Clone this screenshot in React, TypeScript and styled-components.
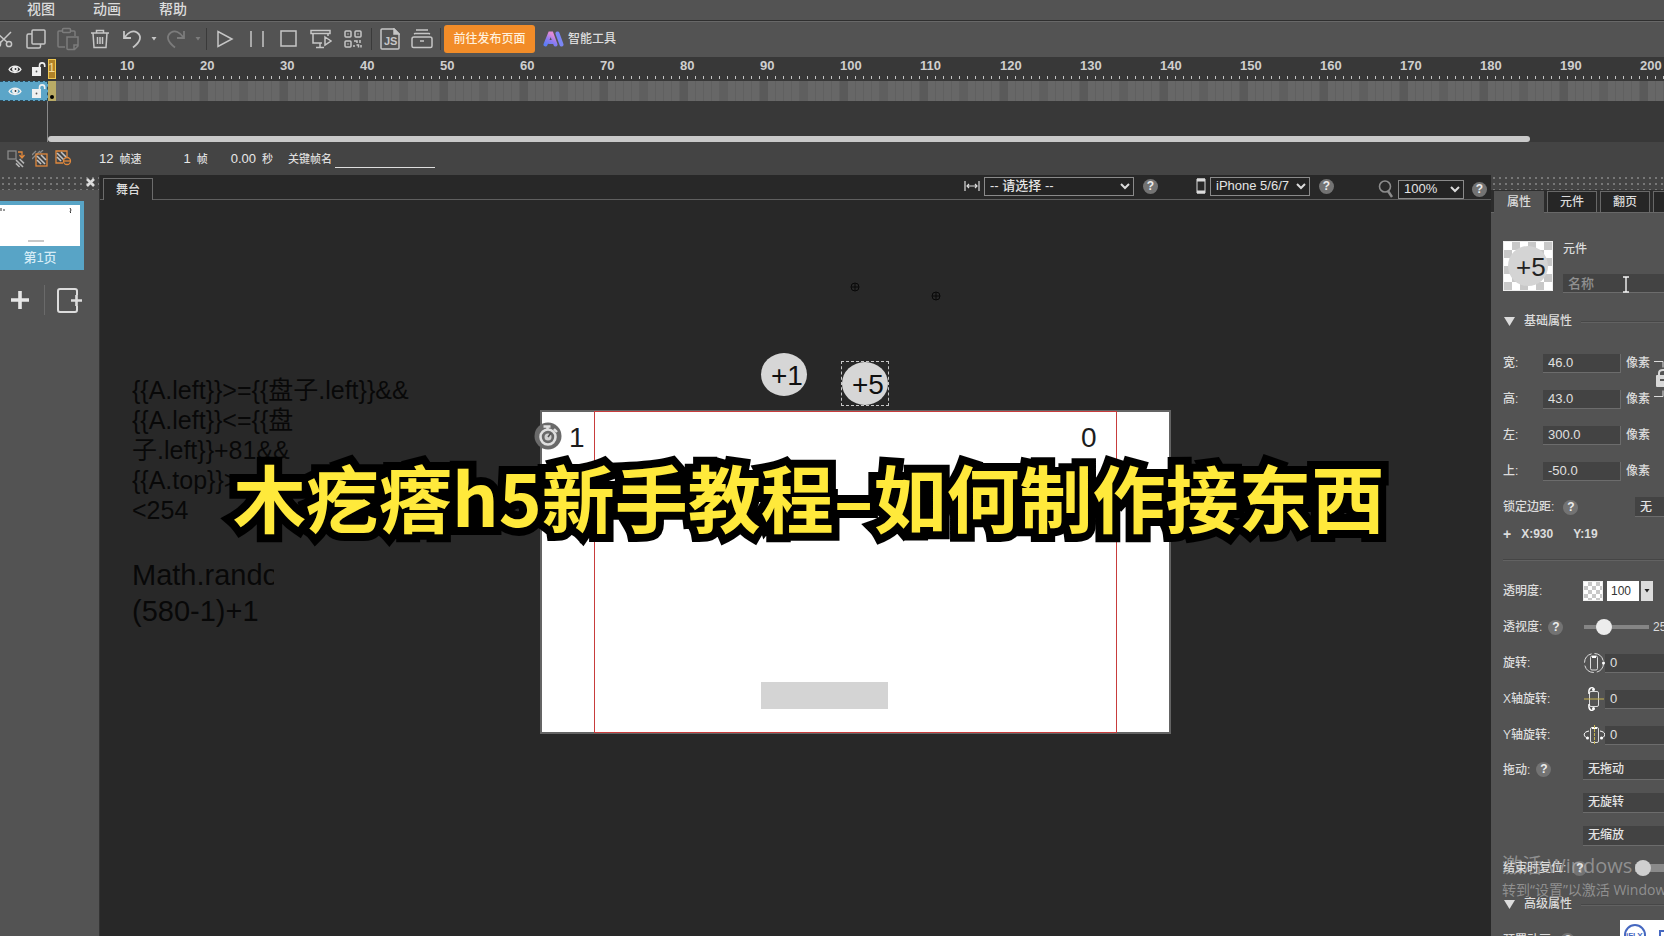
import React from "react";
import styled, { createGlobalStyle, css } from "styled-components";

const GlobalStyle = createGlobalStyle`
  *, *::before, *::after { box-sizing: border-box; }
  html, body, #root { height: 100%; }
  body {
    margin: 0;
    overflow: hidden;
    background: #282828;
    color: #dcdcdc;
    font: 500 12px/16px "Liberation Sans", "Noto Sans CJK SC", sans-serif;
  }
  button, input, select, textarea { font: inherit; color: inherit; border-radius: 0; }
  button { padding: 0; border: 0; background: none; }
  svg { display: block; flex: none; }
`;

const App_ = styled.div`
  position: relative;
  display: flex;
  flex-direction: column;
  height: 100vh;
  overflow: hidden;
  white-space: nowrap;
`;

/* ---------- menu and toolbar ---------- */

const MenuBar = styled.nav`
  display: flex;
  align-items: center;
  gap: 38px;
  flex: none;
  height: 20px;
  padding: 0 0 2px 27px;
  background: #535353;
`;

const MenuItem = styled.button`
  font-size: 14px;
  line-height: 18px;
`;

const Toolbar = styled.div`
  display: flex;
  align-items: center;
  flex: none;
  height: 37px;
  border-top: 1px solid #2f2f2f;
  box-shadow: inset 0 1px #686868;
  background: #535353;
`;

const Tool = styled.button<{ $narrow?: boolean; $dim?: boolean; $cut?: boolean }>`
  display: flex;
  justify-content: center;
  flex: none;
  width: ${(p) => (p.$narrow ? 12 : 32)}px;
  margin-left: ${(p) => (p.$cut ? -12 : 0)}px;
  color: ${(p) => (p.$dim ? "#7c7c7c" : "#c6c6c6")};
`;

const Separator = styled.span`
  flex: none;
  width: 1px;
  height: 22px;
  margin: 0 2px;
  background: #3a3a3a;
`;

const PublishButton = styled.button`
  width: 91px;
  height: 28px;
  margin: 0 8px 0 1px;
  border-radius: 3px;
  background: #f28c28;
  color: #fff0dc;
`;

const SmartTools = styled.button`
  display: flex;
  align-items: center;
  gap: 4px;
`;

/* ---------- timeline ---------- */

const Timeline = styled.section`
  display: grid;
  grid-template-columns: 48px 1fr;
  grid-template-rows: 24px 20px 41px;
  flex: none;
  background: #383838;
`;

const LayerCell = styled.div<{ $active?: boolean }>`
  display: flex;
  align-items: center;
  gap: 9px;
  padding-left: 8px;
  color: #f0f0f0;
  ${(p) =>
    p.$active &&
    css`
      border: 1px dashed #2b4d5e;
      border-left: 0;
      background: #5ba5c8;
    `}
`;

const Ruler = styled.div`
  display: flex;
  min-width: 0;
  overflow: hidden;
  background: repeating-linear-gradient(90deg, transparent 0 7px, #c4c4c4 7px 8px) 8px 19px / 100% 3px no-repeat;
`;

const Playhead = styled.div`
  flex: none;
  width: 8px;
  height: 20px;
  margin: 2px 64px 0 0;
  border: 1px solid #f0c850;
  background: #b08228;
  color: #f4dc96;
  font-size: 13px;
  text-align: center;
  text-indent: -1px;
`;

const RulerMark = styled.span`
  flex: none;
  width: 80px;
  padding-top: 1px;
  font-size: 13px;
  font-weight: 700;
  color: #cfcfcf;
`;

const Frames = styled.div`
  display: flex;
  min-width: 0;
  background:
    repeating-linear-gradient(90deg, transparent 0 72px, #5a5a5a 72px 80px),
    repeating-linear-gradient(90deg, transparent 0 32px, #5f5f5f 32px 40px),
    repeating-linear-gradient(90deg, #676767 0 7px, #606060 7px 8px);
`;

const KeyFrame = styled.button`
  display: flex;
  align-items: flex-end;
  justify-content: center;
  width: 8px;
  padding-bottom: 2px;
  background: #b9ab66;

  &::after {
    content: "";
    width: 4px;
    height: 4px;
    border-radius: 50%;
    background: #000;
  }
`;

const Tracks = styled.div`
  display: flex;
  align-items: flex-end;
  grid-column: 2;
  border-left: 1px solid #8a8a8a;
  margin-left: -1px;
`;

const ScrollThumb = styled.div`
  width: 91.7%;
  height: 6px;
  border-radius: 3px;
  background: #c9c9c9;
`;

const InfoBar = styled.div`
  display: flex;
  align-items: center;
  flex: none;
  height: 33px;
  padding-left: 7px;
  background: #444;
  font-size: 11px;
`;

const InfoIcons = styled.div`
  display: flex;
  gap: 6px;
  width: 92px;
`;

const Metric = styled.span<{ $gap: number }>`
  display: flex;
  align-items: baseline;
  gap: 6px;
  margin-right: ${(p) => p.$gap}px;

  b { font-size: 13px; font-weight: 400; color: #e8e8e8; }
`;

const FrameName = styled.input`
  width: 100px;
  height: 18px;
  margin-left: 3px;
  padding: 0;
  border: 0;
  border-bottom: 1px solid #dedede;
  background: transparent;
`;

/* ---------- work area ---------- */

const Work = styled.div`
  display: flex;
  flex: 1;
  min-height: 0;
`;

const dots = css`
  background: radial-gradient(circle, #777 0 1px, transparent 1px) 0 0 / 6px 6px #444;
`;

const PagePanel = styled.aside`
  flex: none;
  width: 100px;
  border-right: 1px solid #333;
  background: #535353;
`;

const Grip = styled.div`
  display: flex;
  align-items: center;
  justify-content: flex-end;
  height: 15px;
  padding-right: 4px;
  ${dots}
`;

const PageCard = styled.button`
  display: flex;
  flex-direction: column;
  align-items: center;
  width: 84px;
  height: 69px;
  margin-top: 11px;
  padding: 4px 4px 0 0;
  background: #58a4c6;
  color: #d6ecf6;
  font-size: 13px;
  line-height: 24px;
`;

const PagePreview = styled.span`
  display: block;
  width: 100%;
  height: 41px;
  background: #fff;
`;

const PageActions = styled.div`
  display: flex;
  align-items: center;
  margin: 15px 0 0 11px;
  height: 30px;
`;

const PageAction = styled.button<{ $first?: boolean }>`
  padding-left: ${(p) => (p.$first ? 0 : 12)}px;
  padding-right: ${(p) => (p.$first ? 15 : 0)}px;
  border-right: ${(p) => (p.$first ? "1px solid #6a6a6a" : "0")};
  height: 30px;
`;

const StageArea = styled.main`
  display: flex;
  flex-direction: column;
  flex: 1;
  min-width: 0;
`;

const StageBar = styled.div`
  display: flex;
  align-items: flex-end;
  flex: none;
  height: 25px;
  padding: 0 4px 0 3px;
  box-shadow: inset 0 -1px #5f5f5f;
`;

const StageTab = styled.button`
  width: 50px;
  height: 22px;
  margin-right: auto;
  border: 1px solid #6c6c6c;
  border-bottom: 0;
  background: #282828;
`;

const BarGroup = styled.div<{ $gap: number; $low?: boolean }>`
  display: flex;
  align-items: center;
  gap: 4px;
  height: 20px;
  margin-right: ${(p) => p.$gap}px;
  margin-bottom: ${(p) => (p.$low ? 1 : 4)}px;
`;

const PickWrap = styled.span<{ $w: number }>`
  display: grid;
  align-items: center;
  width: ${(p) => p.$w}px;

  > * { grid-area: 1 / 1; }
  > svg { justify-self: end; margin-right: 4px; pointer-events: none; }
`;

const PickBox = styled.select`
  appearance: none;
  width: 100%;
  height: 19px;
  padding: 0 0 0 5px;
  border: 1px solid #8a8a8a;
  background: #242424;
  color: #e4e4e4;
  font-size: 13px;
  line-height: 16px;
`;

const HelpDot = styled.button<{ $inset?: number }>`
  flex: none;
  width: 15px;
  height: 15px;
  margin-left: ${(p) => p.$inset ?? 0}px;
  border-radius: 50%;
  background: #737373;
  color: #ececec;
  font-size: 12px;
  font-weight: 700;
  line-height: 15px;
  text-align: center;
`;

/* Free canvas: items are placed where the author dropped them. */
const Canvas = styled.div`
  position: relative;
  flex: 1;
  overflow: hidden;
  background: #282828;
  font-weight: 400;
`;

const Note = styled.p<{ $size: number; $lh: number; $w: number; $top: number }>`
  position: absolute;
  left: 32px;
  top: ${(p) => p.$top}px;
  width: ${(p) => p.$w}px;
  margin: 0;
  overflow: hidden;
  color: #080808;
  font-size: ${(p) => p.$size}px;
  line-height: ${(p) => p.$lh}px;
`;

const Artboard = styled.div`
  position: absolute;
  left: 440px;
  top: 210px;
  width: 631px;
  height: 324px;
  border: 2px solid #646464;
  background: #fff;
`;

const SafeArea = styled.div`
  position: absolute;
  left: 494px;
  top: 211px;
  width: 523px;
  height: 322px;
  border: 1px solid #c83c3c;
`;

const Placed = styled.div<{ $x: number; $y: number }>`
  position: absolute;
  left: ${(p) => p.$x}px;
  top: ${(p) => p.$y}px;
`;

const Digit = styled(Placed)`
  color: #1c1c1c;
  font-size: 28px;
  line-height: 32px;
`;

const Plate = styled(Placed)`
  width: 127px;
  height: 27px;
  background: #d4d4d4;
`;

const Ball = styled(Placed)<{ $selected?: boolean }>`
  width: 48px;
  height: 45px;
  border: 1px dashed ${(p) => (p.$selected ? "#c8c8c8" : "transparent")};

  span {
    display: block;
    height: 43px;
    padding-left: 10px;
    border-radius: 50%;
    background: #d6d6d6;
    color: #101010;
    font-size: 28px;
    line-height: 45px;
  }
`;

const Caption = styled.h1`
  position: absolute;
  left: 233px;
  top: 443px;
  margin: 0;
  color: #ffe93b;
  font: 700 73px/104px "Noto Sans CJK SC", sans-serif;
  -webkit-text-stroke: 16px #000;
  paint-order: stroke fill;
  pointer-events: none;
`;

/* ---------- property panel ---------- */

const PropPanel = styled.aside`
  position: relative;
  flex: none;
  width: 173px;
  overflow: hidden;
  background: #535353;
`;

const Tabs = styled.div`
  display: flex;
  gap: 3px;
  height: 23px;
  padding: 1px 0 0 3px;
  background: #2c2c2c;
  box-shadow: inset 0 -1px #686868;
`;

const Tab = styled.button<{ $on?: boolean }>`
  flex: none;
  width: 50px;
  height: 22px;
  border: 1px solid ${(p) => (p.$on ? "#535353" : "#686868")};
  background: ${(p) => (p.$on ? "#535353" : "#262626")};
`;

const Identity = styled.div`
  display: flex;
  gap: 10px;
  padding: 28px 0 8px 12px;
`;

const Swatch = styled.div<{ $size: number }>`
  flex: none;
  width: ${(p) => p.$size}px;
  height: ${(p) => p.$size}px;
  border: 1px solid #eee;
  background: repeating-conic-gradient(#c8c8c8 0 25%, #fff 0 50%) 0 0 / ${(p) => (p.$size > 30 ? 16 : 8)}px
    ${(p) => (p.$size > 30 ? 16 : 8)}px;

  span {
    display: block;
    height: 40px;
    margin: 4px;
    padding-left: 8px;
    border-radius: 50%;
    background: #d4d4d4;
    color: #222;
    font-size: 26px;
    font-weight: 400;
    line-height: 42px;
  }
`;

const NameColumn = styled.label`
  display: flex;
  flex-direction: column;
  gap: 17px;
`;

const Field = styled.input<{ $w: number }>`
  flex: none;
  width: ${(p) => p.$w}px;
  height: 19px;
  padding: 0 5px;
  border: solid #6c6c6c;
  border-width: 0 1px 1px 0;
  background: #434343;
  color: #e0e0e0;
  font-size: 13px;

  &::placeholder { color: #909090; opacity: 1; }
`;

const SectionHead = styled.h2`
  display: flex;
  align-items: center;
  gap: 9px;
  height: 24px;
  margin: 8px 0 6px 13px;
  font-size: 12px;
  font-weight: 500;

  &::after {
    content: "";
    flex: 1;
    height: 1px;
    background: #474747;
    box-shadow: 0 1px #626262;
  }
`;

const Rows = styled.div`
  padding-top: 6px;
`;

const Row = styled.div<{ $h?: number }>`
  display: flex;
  align-items: center;
  height: ${(p) => p.$h ?? 36}px;
  padding-left: 12px;
`;

const RowLabel = styled.div<{ $w: number }>`
  display: flex;
  align-items: center;
  gap: 6px;
  flex: none;
  width: ${(p) => p.$w}px;
`;

const Unit = styled.span`
  margin-left: 5px;
`;

const RatioLock = styled.button`
  position: absolute;
  left: 163px;
  top: 183px;
`;

const Position = styled(Row)`
  gap: 20px;
  font-weight: 600;

  span:first-child { margin-right: -10px; font-size: 14px; }
`;

const Rule = styled.hr`
  height: 2px;
  margin: 16px 0 12px 12px;
  border: 0;
  background: #454545;
  border-bottom: 1px solid #626262;
`;

const Opacity = styled.input`
  width: 32px;
  height: 20px;
  margin: 0 2px 0 4px;
  padding: 0 4px;
  border: 0;
  background: #fff;
  color: #333;
`;

const DropArrow = styled.button`
  display: grid;
  place-items: center;
  width: 12px;
  height: 20px;
  background: #dcdcdc;
`;

const Slider = styled.input`
  appearance: none;
  flex: none;
  width: 65px;
  height: 16px;
  margin: 0 4px 0 1px;
  background: linear-gradient(#858585, #858585) center / 100% 4px no-repeat;

  &::-webkit-slider-thumb {
    appearance: none;
    width: 16px;
    height: 16px;
    border-radius: 50%;
    background: #ececec;
  }
`;

const Choice = styled.select`
  appearance: none;
  flex: none;
  width: 140px;
  height: 20px;
  padding: 0 5px;
  border: 0;
  border-bottom: 1px solid #6c6c6c;
  background: #434343;
  color: #e4e4e4;
`;

const AxisIcon = styled.span`
  width: 28px;
`;

const Toggle = styled.input`
  appearance: none;
  flex: none;
  width: 40px;
  height: 16px;
  margin: 0;
  background: linear-gradient(#8a8a8a, #8a8a8a) center / 100% 8px no-repeat;

  &::before {
    content: "";
    display: block;
    width: 16px;
    height: 16px;
    border-radius: 50%;
    background: #cfcfcf;
  }
`;

const Watermark = styled.div`
  position: absolute;
  left: 11px;
  top: 679px;
  color: rgba(205, 205, 205, 0.5);
  font-family: "Open Sans", "Noto Sans CJK SC", sans-serif;
  font-weight: 400;
  font-size: 14px;
  line-height: 24px;
  pointer-events: none;

  strong { display: block; font-size: 20px; font-weight: 400; }
`;

const Badge = styled.div`
  position: absolute;
  left: 129px;
  top: 745px;
`;

const Pointer = styled.div`
  position: absolute;
  left: 131px;
  top: 101px;
`;

/* ---------- drawings ---------- */

type DrawProps = { w: number; h?: number; sw?: number; children: React.ReactNode };
const Draw = ({ w, h = w, sw = 1.5, children }: DrawProps) => (
  <svg width={w} height={h} viewBox={`0 0 ${w} ${h}`} fill="none" stroke="currentColor" strokeWidth={sw} aria-hidden="true">
    {children}
  </svg>
);

const Caret = () => <Draw w={6} h={4} sw={0}><path d="M0.5 0h5L3 3.6z" fill="currentColor" /></Draw>;
const Chevron = () => <Draw w={10} h={7} sw={2}><path d="M1 1l4 4 4-4" /></Draw>;
const Triangle = () => <Draw w={11} h={9} sw={0}><path d="M0 0h11L5.5 9z" fill="#dcdcdc" /></Draw>;

const Eye = () => (
  <Draw w={14} h={10} sw={1.3}>
    <path d="M1 5.5C3.5 1 10.5 1 13 5.5 10.5 9.5 3.500 9.5 1 5.500z" />
    <circle cx="7" cy="5" r="2.300" fill="currentColor" />
    <circle cx="7.500" cy="5" r="0.900" fill="#333" stroke="none" />
  </Draw>
);

const OpenLock = () => (
  <Draw w={15} h={14} sw={1.6}>
    <path d="M8.500 6V3.500a2.600 2.600 0 015.200 0V5" />
    <rect x="1" y="5" width="9" height="9" fill="currentColor" stroke="none" />
    <circle cx="5.500" cy="9.500" r="0.900" fill="#555" stroke="none" />
  </Draw>
);

const Hatch = ({ x, y, s, c }: { x: number; y: number; s: number; c: string }) => (
  <g stroke={c} strokeWidth={1.6}>
    <path d={`M${x} ${y + s * 0.55}l${s * 0.45} ${s * 0.45}M${x} ${y + 1}l${s - 1} ${s - 1}M${x + s * 0.45} ${y}l${s * 0.55} ${s * 0.55}`} />
  </g>
);

const Caption_ = "木疙瘩h5新手教程–如何制作接东西";

const marks = Array.from({ length: 32 }, (_, i) => (i + 1) * 10);

const sizes = [
  { id: "w", label: "宽:", value: "46.0" },
  { id: "h", label: "高:", value: "43.0" },
  { id: "l", label: "左:", value: "300.0" },
  { id: "t", label: "上:", value: "-50.0" },
];

const rotations = [
  {
    id: "rz",
    label: "旋转:",
    icon: (
      <Draw w={22} sw={1}>
        <circle cx="11" cy="11" r="9.500" strokeDasharray="12 3" />
        <rect x="7.500" y="4" width="7" height="14" rx="1.500" />
        <path d="M9 5h4" stroke="#fff" strokeWidth="2" />
        <circle cx="20.500" cy="11" r="1.500" fill="#fff" stroke="none" />
      </Draw>
    ),
  },
  {
    id: "rx",
    label: "X轴旋转:",
    icon: (
      <Draw w={22} h={26} sw={1}>
        <rect x="6.500" y="5.500" width="9" height="15" rx="1.500" />
        <path d="M6 8C5 2 9 0 11 3M6 18c-1 6 3 8 5 5" stroke="#fff" strokeWidth="1.400" />
        <circle cx="10.500" cy="3.500" r="1.500" fill="#fff" stroke="none" />
        <circle cx="10.500" cy="22.500" r="1.500" fill="#fff" stroke="none" />
        <path d="M1 13h20" stroke="#c8b450" />
      </Draw>
    ),
  },
  {
    id: "ry",
    label: "Y轴旋转:",
    icon: (
      <Draw w={22} sw={1}>
        <rect x="7.500" y="3.500" width="8" height="15" rx="1.500" />
        <path d="M6 7C0 8 0 12 4 14M17 7c6 1 6 5 2 7" stroke="#fff" />
        <circle cx="4.500" cy="14" r="1.500" fill="#fff" stroke="none" />
        <circle cx="18.500" cy="14" r="1.500" fill="#fff" stroke="none" />
        <path d="M9 4h5" stroke="#fff" strokeWidth="2" />
        <path d="M11.500 1v20" stroke="#c8b450" strokeDasharray="3 1" />
      </Draw>
    ),
  },
];

const Help = ({ inset }: { inset?: number }) => (
  <HelpDot $inset={inset} type="button" aria-label="帮助">?</HelpDot>
);

const Pick = ({ w, label, value }: { w: number; label: string; value: string }) => (
  <PickWrap $w={w}>
    <PickBox aria-label={label}><option>{value}</option></PickBox>
    <Chevron />
  </PickWrap>
);

export default function App() {
  return (
    <App_>
      <GlobalStyle />
      <MenuBar>
        <MenuItem>视图</MenuItem>
        <MenuItem>动画</MenuItem>
        <MenuItem>帮助</MenuItem>
      </MenuBar>

      <Toolbar>
        <Tool $cut aria-label="剪切">
          <Draw w={20}><path d="M3 4l10 9M17 3L6 14" /><circle cx="15" cy="15" r="2.600" /><circle cx="4" cy="15" r="2.600" /></Draw>
        </Tool>
        <Tool aria-label="复制">
          <Draw w={20}><rect x="6" y="1" width="13" height="14" rx="1" /><path d="M6 5H2.500Q1 5 1 6.500V18q0 1 1 1h11q1.500 0 1.500-1.500V15" /></Draw>
        </Tool>
        <Tool $dim aria-label="粘贴">
          <Draw w={22} h={24}><path d="M5 4H2q-1 0-1 1v14q0 1 1 1h6M14 4h3q1 0 1 1v4" /><rect x="5.500" y="1.500" width="8" height="4" rx="1" /><path d="M10 10h11v9l-3.500 3.500H11q-1 0-1-1zM21 18h-4v4" /></Draw>
        </Tool>
        <Tool aria-label="删除">
          <Draw w={20}><path d="M1 4h18M6.500 4V1.500h7V4M3 4l1 14.500h12L17 4M7.500 8v7M10 8v7M12.500 8v7" /></Draw>
        </Tool>
        <Tool aria-label="撤销">
          <Draw w={20} sw={1.8}><path d="M2 2v7h7M2.500 8.500C6 3 11 1 15 3.500c5 3.500 4 9-4 15" /></Draw>
        </Tool>
        <Tool $narrow aria-label="撤销历史"><Caret /></Tool>
        <Tool $dim aria-label="重做">
          <Draw w={20} sw={1.8}><path d="M18 2v7h-7M17.500 8.500C14 3 9 1 5 3.500c-5 3.500-4 9 4 15" /></Draw>
        </Tool>
        <Tool $narrow $dim aria-label="重做历史"><Caret /></Tool>
        <Separator />
        <Tool aria-label="播放"><Draw w={18}><path d="M2 1.500v15L16 9z" /></Draw></Tool>
        <Tool aria-label="暂停"><Draw w={16}><path d="M2 0v16M14 0v16" /></Draw></Tool>
        <Tool aria-label="停止"><Draw w={18}><rect x="1" y="1" width="15" height="15" /></Draw></Tool>
        <Tool aria-label="预览">
          <Draw w={22} h={20}><rect x="1" y="1.500" width="19" height="3" /><path d="M3 5v9h9M18 5v2M15 8l6 4-6 4zM10 14v4M6 18.500h8" /></Draw>
        </Tool>
        <Tool aria-label="二维码">
          <Draw w={18}>
            <rect x="1" y="1" width="6" height="6" rx="1" /><rect x="11" y="1" width="6" height="6" rx="1" /><rect x="1" y="11" width="6" height="6" rx="1" />
            <path d="M3.500 4h1M13.500 4h1M3.500 14h1M10 11h3v2M16 10v3M10 15v2M12.500 15h2v2.500M17 15v2.500" />
          </Draw>
        </Tool>
        <Separator />
        <Tool aria-label="脚本">
          <Draw w={20} h={22}>
            <path d="M1 2q0-1 1-1h12l5 5v14q0 1-1 1H2q-1 0-1-1z" /><path d="M14 1v5h5z" fill="currentColor" />
            <text x="4" y="17" fill="currentColor" stroke="none" fontSize="11" fontWeight="700">JS</text>
          </Draw>
        </Tool>
        <Tool aria-label="资源">
          <Draw w={22} h={20}><path d="M5 1h12M3 5l1-.5h14l1 .5M9 12h4" /><path d="M3 8h16q2 0 2 2v7q0 1.500-1.500 1.500h-17Q1 18.500 1 17v-7q0-2 2-2z" /></Draw>
        </Tool>
        <Separator />
        <PublishButton>前往发布页面</PublishButton>
        <SmartTools>
          <svg width="21" height="16" viewBox="0 0 21 16" fill="none" strokeWidth="4" strokeLinecap="round" aria-hidden="true">
            <defs>
              <linearGradient id="ai" x1="0" y1="1" x2="0.5" y2="0">
                <stop offset="0" stopColor="#5b7cf5" /><stop offset="0.5" stopColor="#8f7bf0" /><stop offset="1" stopColor="#e08ad8" />
              </linearGradient>
            </defs>
            <path d="M2.500 13.500L7 2.500h1.500l4 11M6 11h4" stroke="url(#ai)" />
            <path d="M14.500 2.500l4 11" stroke="#7a86f5" />
          </svg>
          智能工具
        </SmartTools>
      </Toolbar>

      <Timeline>
        <LayerCell><Eye /><OpenLock /></LayerCell>
        <Ruler>
          <Playhead>1</Playhead>
          {marks.map((n) => <RulerMark key={n}>{n}</RulerMark>)}
        </Ruler>
        <LayerCell $active><Eye /><OpenLock /></LayerCell>
        <Frames><KeyFrame aria-label="第1帧" /></Frames>
        <Tracks><ScrollThumb /></Tracks>
      </Timeline>

      <InfoBar>
        <InfoIcons>
          <Draw w={19} h={18} sw={1.3}><rect x="1" y="1" width="8" height="8" stroke="#8a8a8a" /><path d="M11 2h4v5M12.500 5l2.500 3 2.500-3" stroke="#e0883c" /><Hatch x={9} y={9} s={8} c="#b4b4b4" /></Draw>
          <Draw w={17} h={18} sw={1.3}><path d="M0 5l4-4M0 9l8-8M8 3l3-3" stroke="#8a8a8a" /><rect x="4" y="4" width="11" height="12" stroke="#e0883c" /><Hatch x={5} y={5} s={9} c="#c4c4c4" /></Draw>
          <Draw w={17} h={18} sw={1.3}><path d="M8 13H1V1h11v6" stroke="#e0883c" /><Hatch x={2} y={2} s={9} c="#c4c4c4" /><circle cx="12" cy="11" r="3.500" stroke="#e0883c" fill="#444" /><path d="M9 11h6" stroke="#e0883c" /></Draw>
        </InfoIcons>
        <Metric $gap={42}><b>12</b>帧速</Metric>
        <Metric $gap={23}><b>1</b>帧</Metric>
        <Metric $gap={15}><b>0.00</b>秒</Metric>
        <label htmlFor="frame-name">关键帧名</label>
        <FrameName id="frame-name" />
      </InfoBar>

      <Work>
        <PagePanel>
          <Grip><button aria-label="关闭"><Draw w={9} h={9} sw={2.6}><path d="M1 1l7 7M8 1L1 8" /></Draw></button></Grip>
          <PageCard>
            <PagePreview>
              <svg width="80" height="41" aria-hidden="true">
                <path d="M1 3v3M4 4v2M70 3l1 2-1 2 1 1" stroke="#333" fill="none" />
                <rect x="28" y="35" width="16" height="2" fill="#c8c8c8" />
              </svg>
            </PagePreview>
            第1页
          </PageCard>
          <PageActions>
            <PageAction $first aria-label="添加页面"><Draw w={18} sw={3.6}><path d="M9 0v18M0 9h18" stroke="#e6e6e6" /></Draw></PageAction>
            <PageAction aria-label="插入页面">
              <Draw w={25} h={25} sw={2}><path d="M20 7V3q0-2-2-2H3Q1 1 1 3v19q0 2 2 2h15q2 0 2-2v-4" stroke="#dcdcdc" /><path d="M19.500 7v11M14 12.500h11" stroke="#dcdcdc" strokeWidth="2.600" /></Draw>
            </PageAction>
          </PageActions>
        </PagePanel>

        <StageArea>
          <StageBar>
            <StageTab>舞台</StageTab>
            <BarGroup $gap={38}>
              <Draw w={16} h={10} sw={1.2}><path d="M1 0v10M15 0v10M3 5h10M5 3L3 5l2 2M11 3l2 2-2 2" /></Draw>
              <Pick w={150} label="适配方式" value="-- 请选择 --" />
              <Help inset={5} />
            </BarGroup>
            <BarGroup $gap={44}>
              <Draw w={10} h={16} sw={1}><path d="M1 1h8v14H1z" /><path d="M1 2h8M1 14h8" strokeWidth="3" /></Draw>
              <Pick w={100} label="设备" value="iPhone 5/6/7" />
              <Help inset={5} />
            </BarGroup>
            <BarGroup $gap={0} $low>
              <Draw w={16} h={18} sw={1.6}><g stroke="#8c8c8c"><circle cx="7" cy="6.500" r="5.500" /><path d="M10 11l4 6" strokeWidth="2.400" /></g></Draw>
              <Pick w={66} label="缩放" value="100%" />
              <Help inset={4} />
            </BarGroup>
          </StageBar>

          <Canvas>
            <Note $size={25} $lh={30} $w={290} $top={175}>
              {"{{A.left}}>={{盘子.left}}&&"}<br />{"{{A.left}}<={{盘"}<br />{"子.left}}+81&&"}<br />{"{{A.top}}>"}<br />{"<254"}
            </Note>
            <Note $size={29} $lh={36} $w={142} $top={357}>Math.rando<br />(580-1)+1</Note>
            <Placed $x={750} $y={82}><Draw w={10} sw={1}><path d="M1 5h8M5 1v8" stroke="#080808" /><circle cx="5" cy="5" r="4" stroke="#080808" /></Draw></Placed>
            <Placed $x={831} $y={91}><Draw w={10} sw={1}><path d="M1 5h8M5 1v8" stroke="#080808" /><circle cx="5" cy="5" r="4" stroke="#080808" /></Draw></Placed>
            <Artboard />
            <SafeArea />
            <Ball $x={660} $y={152}><span>+1</span></Ball>
            <Ball $x={741} $y={161} $selected><span>+5</span></Ball>
            <Placed $x={434} $y={222}>
              <svg width="28" height="28" viewBox="0 0 28 28" fill="none" aria-hidden="true">
                <circle cx="14" cy="14" r="13.500" fill="#6a6a6a" />
                <circle cx="14" cy="15" r="7.500" stroke="#e0e0e0" strokeWidth="2.600" />
                <circle cx="14" cy="15" r="3.500" fill="#d0d0d0" />
                <path d="M14 15l3-4" stroke="#555" strokeWidth="1.500" />
                <path d="M9.500 4.500h7M13.500 4v4M20 7l3 3" stroke="#e0e0e0" strokeWidth="2.400" />
              </svg>
            </Placed>
            <Digit $x={469} $y={222}>1</Digit>
            <Digit $x={981} $y={222}>0</Digit>
            <Plate $x={661} $y={482} />
          </Canvas>
        </StageArea>

        <PropPanel>
          <Grip />
          <Tabs>
            <Tab $on>属性</Tab>
            <Tab>元件</Tab>
            <Tab>翻页</Tab>
            <Tab aria-label="更多" />
          </Tabs>
          <Identity>
            <Swatch $size={50}><span>+5</span></Swatch>
            <NameColumn>
              元件
              <Field $w={160} placeholder="名称" />
            </NameColumn>
          </Identity>
          <SectionHead><Triangle />基础属性</SectionHead>
          <Rows>
            {sizes.map((s) => (
              <Row key={s.id}>
                <RowLabel $w={40}><label htmlFor={s.id}>{s.label}</label></RowLabel>
                <Field $w={78} id={s.id} defaultValue={s.value} />
                <Unit>像素</Unit>
              </Row>
            ))}
            <Row>
              <RowLabel $w={132}><label htmlFor="margin">锁定边距:</label><Help inset={3} /></RowLabel>
              <Choice id="margin"><option>无</option></Choice>
            </Row>
            <Position $h={18}><span>+</span><span>X:930</span><span>Y:19</span></Position>
          </Rows>
          <Rule />
          <Row>
            <RowLabel $w={80}><label htmlFor="opacity">透明度:</label></RowLabel>
            <Swatch $size={20} />
            <Opacity id="opacity" defaultValue="100" />
            <DropArrow aria-label="选择透明度"><Draw w={6} h={4} sw={0}><path d="M0.5 0h5L3 3.600z" fill="#222" /></Draw></DropArrow>
          </Row>
          <Row>
            <RowLabel $w={80}><label htmlFor="perspective">透视度:</label><Help /></RowLabel>
            <Slider id="perspective" type="range" min={0} max={100} defaultValue={25} />
            25
          </Row>
          {rotations.map((r) => (
            <Row key={r.id}>
              <RowLabel $w={80}><label htmlFor={r.id}>{r.label}</label></RowLabel>
              <AxisIcon>{r.icon}</AxisIcon>
              <Field $w={100} id={r.id} defaultValue="0" />
            </Row>
          ))}
          <Row $h={33}>
            <RowLabel $w={80}><label htmlFor="drag">拖动:</label><Help /></RowLabel>
            <Choice id="drag"><option>无拖动</option></Choice>
          </Row>
          <Row $h={33}>
            <RowLabel $w={80} />
            <Choice aria-label="旋转方式"><option>无旋转</option></Choice>
          </Row>
          <Row $h={33}>
            <RowLabel $w={80} />
            <Choice aria-label="缩放方式"><option>无缩放</option></Choice>
          </Row>
          <Row $h={32}>
            <RowLabel $w={132}><label htmlFor="reset">结束时复位:</label><Help /></RowLabel>
            <Toggle id="reset" type="checkbox" />
          </Row>
          <SectionHead><Triangle />高级属性</SectionHead>
          <Row>
            <RowLabel $w={132}>预置动画:<Help /></RowLabel>
          </Row>

          <RatioLock aria-label="锁定比例">
            <Draw w={22} h={42} sw={1}>
              <path d="M0 3.500h9v6M0 38.500h9v-6" />
              <rect x="2" y="17" width="14" height="12" rx="1" fill="#d8d8d8" stroke="none" />
              <path d="M5 17v-2q0-3 4-3t4 3v2" stroke="#d8d8d8" strokeWidth="2" />
              <path d="M6 22h4" stroke="#555" strokeWidth="2" />
            </Draw>
          </RatioLock>
          <Pointer>
            <Draw w={8} h={17} sw={1.4}><path d="M1 1h2.500L4 2l.5-1H7M4 2v13M1 16h2.500L4 15l.5 1H7" stroke="#f4f4f4" /></Draw>
          </Pointer>
          <Watermark><strong>激活 Windows</strong>转到“设置”以激活 Windows。</Watermark>
          <Badge>
            <svg width="60" height="40" viewBox="0 0 60 40" aria-hidden="true">
              <rect width="60" height="40" fill="#fff" />
              <circle cx="15" cy="15" r="10" fill="none" stroke="#4668c0" strokeWidth="2" />
              <text x="6" y="18" fontSize="8" fontWeight="700" fill="#4668c0">iFLY</text>
              <path d="M40 30V11h14" fill="none" stroke="#4668c0" strokeWidth="2" />
            </svg>
          </Badge>
        </PropPanel>
      </Work>

      <Caption>{Caption_}</Caption>
    </App_>
  );
}
